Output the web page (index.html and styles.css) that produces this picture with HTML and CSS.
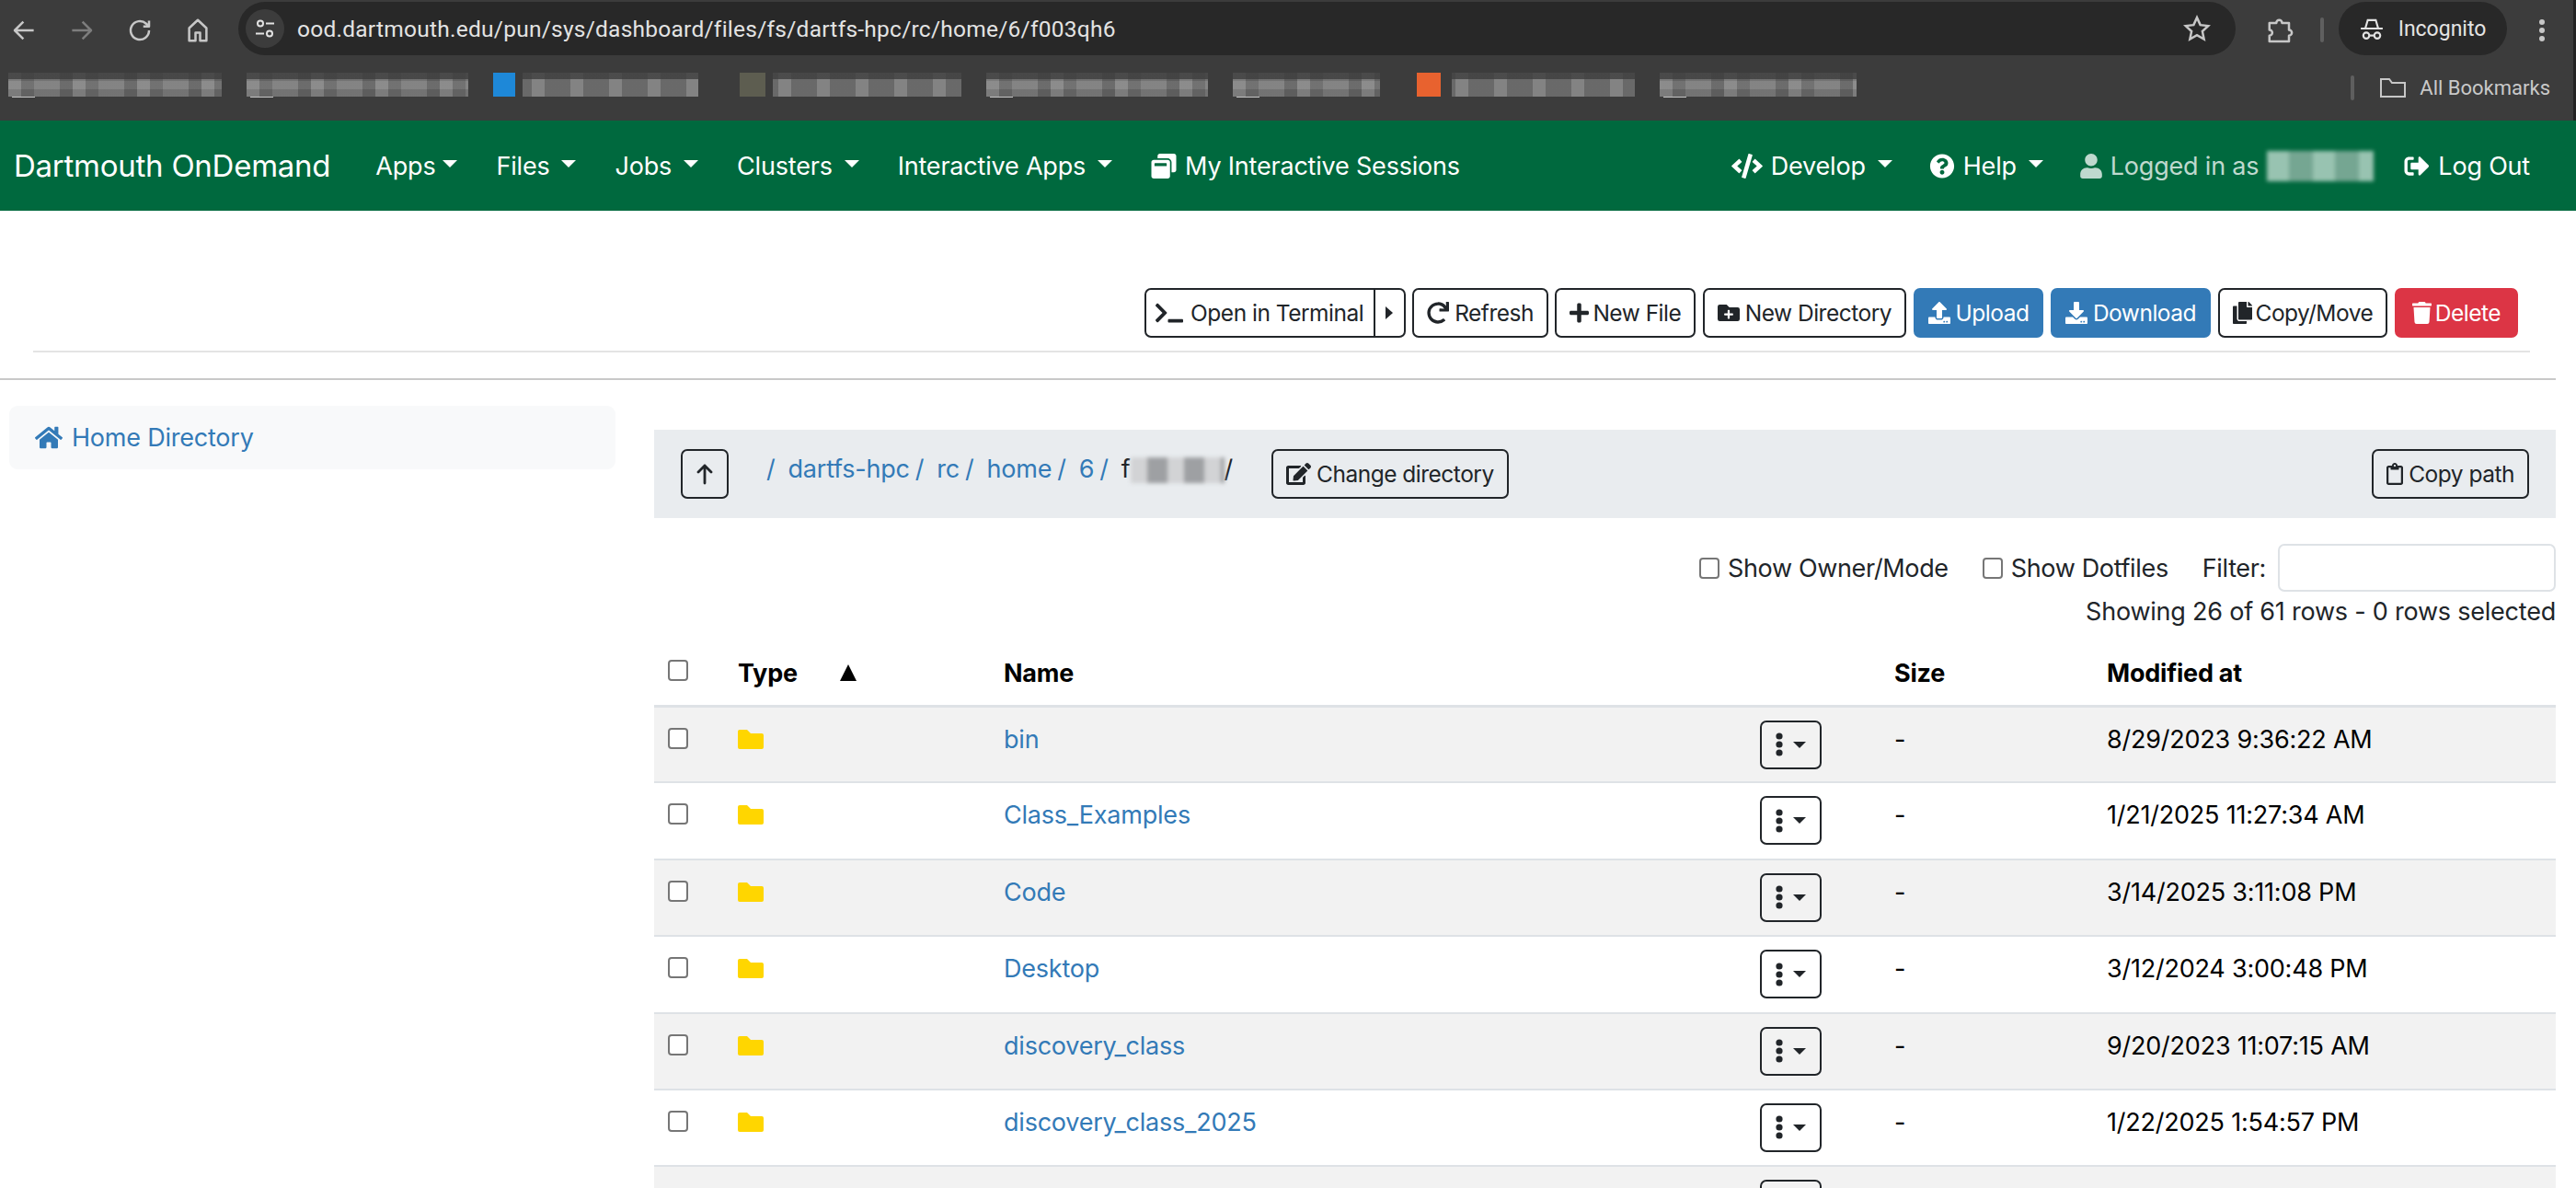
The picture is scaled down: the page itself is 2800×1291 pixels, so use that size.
FILE: index.html
```html
<!DOCTYPE html>
<html lang="en">
<head>
<meta charset="utf-8">
<title>Dartmouth OnDemand</title>
<link rel="stylesheet" href="styles.css">
</head>
<body>
<svg class="sprite" aria-hidden="true">
<symbol id="i-terminal" viewBox="0 0 640 512"><path d="M257.981 272.971L63.638 467.314c-9.373 9.373-24.569 9.373-33.941 0L7.029 444.647c-9.357-9.357-9.375-24.522-.04-33.901L161.011 256 6.99 101.255c-9.335-9.379-9.317-24.544.04-33.901l22.667-22.667c9.373-9.373 24.569-9.373 33.941 0L257.981 239.03c9.373 9.372 9.373 24.568 0 33.941zM640 456v-32c0-13.255-10.745-24-24-24H312c-13.255 0-24 10.745-24 24v32c0 13.255 10.745 24 24 24h304c13.255 0 24-10.745 24-24z"/></symbol>
<symbol id="i-redo" viewBox="0 0 512 512"><path d="M500.33 0h-47.41a12 12 0 0 0-12 12.57l4 82.76A247.42 247.42 0 0 0 256 8C119.34 8 7.9 119.53 8 256.19 8.1 393.07 119.1 504 256 504a247.1 247.1 0 0 0 166.18-63.91 12 12 0 0 0 .48-17.43l-34-34a12 12 0 0 0-16.38-.55A176 176 0 1 1 402.1 157.8l-101.53-4.87a12 12 0 0 0-12.57 12v47.41a12 12 0 0 0 12 12h200.33a12 12 0 0 0 12-12V12a12 12 0 0 0-12-12z"/></symbol>
<symbol id="i-plus" viewBox="0 0 448 512"><path d="M416 208H272V64c0-17.67-14.33-32-32-32h-32c-17.67 0-32 14.33-32 32v144H32c-17.67 0-32 14.33-32 32v32c0 17.67 14.33 32 32 32h144v144c0 17.67 14.33 32 32 32h32c17.67 0 32-14.33 32-32V304h144c17.67 0 32-14.33 32-32v-32c0-17.67-14.33-32-32-32z"/></symbol>
<symbol id="i-folder-plus" viewBox="0 0 512 512"><path d="M464,128H272L208,64H48A48,48,0,0,0,0,112V400a48,48,0,0,0,48,48H464a48,48,0,0,0,48-48V176A48,48,0,0,0,464,128ZM359.5,296a16,16,0,0,1-16,16h-64v64a16,16,0,0,1-16,16h-16a16,16,0,0,1-16-16V312h-64a16,16,0,0,1-16-16V280a16,16,0,0,1,16-16h64V200a16,16,0,0,1,16-16h16a16,16,0,0,1,16,16v64h64a16,16,0,0,1,16,16Z"/></symbol>
<symbol id="i-upload" viewBox="0 0 512 512"><path d="M296 384h-80c-13.3 0-24-10.7-24-24V192h-87.7c-17.8 0-26.7-21.5-14.1-34.1L242.3 5.7c7.5-7.5 19.8-7.5 27.3 0l152.2 152.2c12.6 12.6 3.7 34.1-14.1 34.1H320v168c0 13.3-10.7 24-24 24zm216-8v112c0 13.3-10.7 24-24 24H24c-13.3 0-24-10.7-24-24V376c0-13.3 10.7-24 24-24h136v8c0 30.9 25.1 56 56 56h80c30.9 0 56-25.1 56-56v-8h136c13.3 0 24 10.7 24 24zm-124 88c0-11-9-20-20-20s-20 9-20 20 9 20 20 20 20-9 20-20zm64 0c0-11-9-20-20-20s-20 9-20 20 9 20 20 20 20-9 20-20z"/></symbol>
<symbol id="i-download" viewBox="0 0 512 512"><path d="M216 0h80c13.3 0 24 10.7 24 24v168h87.7c17.8 0 26.7 21.5 14.1 34.1L269.7 378.3c-7.5 7.5-19.8 7.5-27.3 0L90.1 226.1c-12.6-12.6-3.7-34.1 14.1-34.1H192V24c0-13.3 10.7-24 24-24zm296 376v112c0 13.3-10.7 24-24 24H24c-13.3 0-24-10.7-24-24V376c0-13.3 10.7-24 24-24h146.7l49 49c20.1 20.1 52.5 20.1 72.6 0l49-49H488c13.3 0 24 10.7 24 24zm-124 88c0-11-9-20-20-20s-20 9-20 20 9 20 20 20 20-9 20-20zm64 0c0-11-9-20-20-20s-20 9-20 20 9 20 20 20 20-9 20-20z"/></symbol>
<symbol id="i-copy" viewBox="0 0 448 512"><path d="M320 448v40c0 13.255-10.745 24-24 24H24c-13.255 0-24-10.745-24-24V120c0-13.255 10.745-24 24-24h72v296c0 30.879 25.121 56 56 56h168zm0-344V0H152c-13.255 0-24 10.745-24 24v368c0 13.255 10.745 24 24 24h272c13.255 0 24-10.745 24-24V128H344c-13.2 0-24-10.8-24-24zm120.971-31.029L375.029 7.029A24 24 0 0 0 358.059 0H352v96h96v-6.059a24 24 0 0 0-7.029-16.97z"/></symbol>
<symbol id="i-trash" viewBox="0 0 448 512"><path d="M432 32H312l-9.4-18.7A24 24 0 0 0 281.1 0H166.8a23.72 23.72 0 0 0-21.4 13.3L136 32H16A16 16 0 0 0 0 48v32a16 16 0 0 0 16 16h416a16 16 0 0 0 16-16V48a16 16 0 0 0-16-16zM53.2 467a48 48 0 0 0 47.9 45h245.8a48 48 0 0 0 47.9-45L416 128H32z"/></symbol>
<symbol id="i-edit" viewBox="0 0 576 512"><path d="M402.6 83.2l90.2 90.2c3.8 3.8 3.8 10 0 13.8L274.4 405.6l-92.8 10.3c-12.4 1.4-22.9-9.1-21.5-21.5l10.3-92.8L388.8 83.2c3.8-3.8 10-3.8 13.8 0zm162-22.9l-48.8-48.8c-15.2-15.2-39.9-15.2-55.2 0l-35.4 35.4c-3.8 3.8-3.8 10 0 13.8l90.2 90.2c3.8 3.8 10 3.8 13.8 0l35.4-35.4c15.2-15.3 15.2-40 0-55.2zM384 346.2V448H64V128h229.8c3.2 0 6.2-1.3 8.5-3.5l40-40c7.6-7.6 2.2-20.5-8.5-20.5H48C21.5 64 0 85.5 0 112v352c0 26.5 21.5 48 48 48h352c26.5 0 48-21.5 48-48V306.2c0-10.7-12.9-16-20.5-8.5l-40 40c-2.2 2.3-3.5 5.3-3.5 8.5z"/></symbol>
<symbol id="i-clipboard" viewBox="0 0 384 512"><path d="M336 64h-80c0-35.3-28.7-64-64-64s-64 28.7-64 64H48C21.5 64 0 85.5 0 112v352c0 26.5 21.5 48 48 48h288c26.5 0 48-21.5 48-48V112c0-26.5-21.5-48-48-48zM192 40c13.3 0 24 10.7 24 24s-10.7 24-24 24-24-10.7-24-24 10.7-24 24-24zm144 418c0 3.3-2.7 6-6 6H54c-3.3 0-6-2.7-6-6V118c0-3.3 2.7-6 6-6h42v36c0 6.6 5.4 12 12 12h168c6.6 0 12-5.4 12-12v-36h42c3.3 0 6 2.7 6 6z"/></symbol>
<symbol id="i-window" viewBox="0 0 512 512"><path d="M512 48v288c0 26.5-21.5 48-48 48h-48V176c0-44.1-35.9-80-80-80H128V48c0-26.5 21.5-48 48-48h288c26.5 0 48 21.5 48 48zM384 176v288c0 26.5-21.5 48-48 48H48c-26.5 0-48-21.5-48-48V176c0-26.5 21.5-48 48-48h288c26.5 0 48 21.5 48 48zm-68 28c0-6.6-5.4-12-12-12H76c-6.6 0-12 5.4-12 12v52h252v-52z"/></symbol>
<symbol id="i-code" viewBox="0 0 640 512"><path d="M278.9 511.5l-61-17.7c-6.4-1.8-10-8.5-8.2-14.9L346.2 8.7c1.8-6.4 8.5-10 14.9-8.2l61 17.7c6.4 1.8 10 8.5 8.2 14.9L293.8 503.3c-1.9 6.4-8.5 10.1-14.9 8.2zm-114-112.2l43.5-46.4c4.6-4.9 4.3-12.7-.8-17.2L117 256l90.6-79.7c5.1-4.5 5.5-12.3.8-17.2l-43.5-46.4c-4.5-4.8-12.1-5.1-17-.5L3.8 247.2c-5.1 4.7-5.1 12.8 0 17.5l144.1 135.1c4.9 4.6 12.5 4.4 17-.5zm327.2.6l144.1-135.1c5.1-4.7 5.1-12.8 0-17.5L492.1 112.1c-4.8-4.5-12.4-4.3-17 .5L431.6 159c-4.6 4.9-4.3 12.7.8 17.2L523 256l-90.6 79.7c-5.1 4.5-5.5 12.3-.8 17.2l43.5 46.4c4.5 4.9 12.1 5.1 17 .6z"/></symbol>
<symbol id="i-help" viewBox="0 0 512 512"><path d="M504 256c0 136.997-111.043 248-248 248S8 392.997 8 256C8 119.083 119.043 8 256 8s248 111.083 248 248zM262.655 90c-54.497 0-89.255 22.957-116.549 63.758-3.536 5.286-2.353 12.415 2.715 16.258l34.699 26.31c5.205 3.947 12.621 3.008 16.665-2.122 17.864-22.658 30.113-35.797 57.303-35.797 20.429 0 45.698 13.148 45.698 32.958 0 14.976-12.363 22.667-32.534 33.976C247.128 238.528 216 254.941 216 296v4c0 6.627 5.373 12 12 12h56c6.627 0 12-5.373 12-12v-1.333c0-28.462 83.186-29.647 83.186-106.667 0-58.002-60.165-102-116.531-102zM256 338c-25.365 0-46 20.635-46 46 0 25.364 20.635 46 46 46s46-20.636 46-46c0-25.365-20.635-46-46-46z"/></symbol>
<symbol id="i-user" viewBox="0 0 448 512"><path d="M224 256c70.7 0 128-57.3 128-128S294.7 0 224 0 96 57.3 96 128s57.3 128 128 128zm89.6 32h-16.7c-22.2 10.2-46.9 16-72.9 16s-50.6-5.8-72.9-16h-16.7C60.2 288 0 348.2 0 422.4V464c0 26.5 21.5 48 48 48h352c26.5 0 48-21.5 48-48v-41.6c0-74.2-60.2-134.4-134.4-134.4z"/></symbol>
<symbol id="i-logout" viewBox="0 0 512 512"><path d="M497 273L329 441c-15 15-41 4.5-41-17v-96H152c-13.3 0-24-10.7-24-24v-96c0-13.3 10.7-24 24-24h136V88c0-21.4 25.9-32 41-17l168 168c9.3 9.4 9.3 24.6 0 34zM192 436v-40c0-6.6-5.4-12-12-12H96c-17.7 0-32-14.3-32-32V160c0-17.7 14.3-32 32-32h84c6.6 0 12-5.4 12-12V76c0-6.6-5.4-12-12-12H96c-53 0-96 43-96 96v192c0 53 43 96 96 96h84c6.6 0 12-5.4 12-12z"/></symbol>
<symbol id="i-home" viewBox="0 0 576 512"><path d="M280.37 148.26L96 300.11V464a16 16 0 0 0 16 16l112.06-.29a16 16 0 0 0 15.92-16V368a16 16 0 0 1 16-16h64a16 16 0 0 1 16 16v95.64a16 16 0 0 0 16 16.05L464 480a16 16 0 0 0 16-16V300L295.67 148.26a12.19 12.19 0 0 0-15.3 0zM571.6 251.47L488 182.56V44.05a12 12 0 0 0-12-12h-56a12 12 0 0 0-12 12v72.61L318.47 43a48 48 0 0 0-61 0L4.34 251.47a12 12 0 0 0-1.6 16.9l25.5 31A12 12 0 0 0 45.15 301l235.22-193.74a12.19 12.19 0 0 1 15.3 0L530.9 301a12 12 0 0 0 16.9-1.6l25.5-31a12 12 0 0 0-1.7-16.93z"/></symbol>
<symbol id="i-folder" viewBox="0 0 28 21"><path d="M2 0h8l4 4h12a2 2 0 0 1 2 2v13a2 2 0 0 1-2 2H2a2 2 0 0 1-2-2V2a2 2 0 0 1 2-2z"/></symbol>
<symbol id="i-dots" viewBox="0 0 8 26"><circle cx="4" cy="4" r="3.6"/><circle cx="4" cy="13" r="3.6"/><circle cx="4" cy="22" r="3.6"/></symbol>
<symbol id="i-up" viewBox="0 0 20 24"><path d="M10 22V3M3 10l7-7 7 7" fill="none" stroke="currentColor" stroke-width="2.8" stroke-linecap="round" stroke-linejoin="round"/></symbol>
</svg>

<header class="chrome">
  <div class="toolbar">
    <div class="tool-nav">
      <svg class="tb-icon" viewBox="0 0 24 24"><path d="M20.500 12H4.500M11.500 4.500L4 12l7.500 7.500"/></svg>
      <svg class="tb-icon dim" viewBox="0 0 24 24"><path d="M3.500 12h16M12.500 4.500L20 12l-7.500 7.500"/></svg>
      <svg class="tb-icon" viewBox="0 0 24 24"><path d="M20 12a8 8 0 1 1-2.500-5.800L20 8.500M20 3.500v5h-5"/></svg>
      <svg class="tb-icon" viewBox="0 0 24 24"><path d="M4.500 21V10L12 3l7.500 7v11h-5.500v-7h-4v7z"/></svg>
    </div>
    <div class="omnibox">
      <span class="site-chip"><svg class="chip-icon" viewBox="0 0 24 24"><circle cx="7" cy="6.500" r="3"/><path d="M13 6.500h9M2 17.500h9"/><circle cx="17" cy="17.500" r="3"/></svg></span>
      <span class="url">ood.dartmouth.edu/pun/sys/dashboard/files/fs/dartfs-hpc/rc/home/6/f003qh6</span>
      <svg class="star" viewBox="0 0 24 24"><path d="M12 2.500l2.900 6.400 6.900.8-5.100 4.700 1.400 6.900-6.100-3.500-6.100 3.500 1.400-6.900-5.100-4.700 6.900-.8z"/></svg>
    </div>
    <svg class="tb-icon ext" viewBox="0 0 24 24"><path d="M3 5.500h6a2.500 2.500 0 0 1 5 0h6v6a2.500 2.500 0 0 1 0 5v5H3v-5a2.500 2.500 0 0 0 0-5z"/></svg>
    <span class="tb-sep"></span>
    <div class="incognito">
      <svg class="inc-icon" viewBox="0 0 24 24"><path d="M1 12h22M5.500 12L8 3.500h8l2.500 8.500"/><circle cx="6.500" cy="19" r="3"/><circle cx="17.500" cy="19" r="3"/><path d="M9.500 19h5"/></svg>
      <span>Incognito</span>
    </div>
    <svg class="menu-dots" viewBox="0 0 6 24"><circle cx="3" cy="3" r="3"/><circle cx="3" cy="12" r="3"/><circle cx="3" cy="21" r="3"/></svg>
  </div>
  <div class="bookmarks">
    <div class="bm-list">
      <span class="bm b1"></span><span class="bm b2"></span><span class="bm b3 blue"></span><span class="bm b4 olive"></span><span class="bm b5"></span><span class="bm b6"></span><span class="bm b7 orange"></span><span class="bm b8"></span>
    </div>
    <div class="all-bm">
      <span class="bm-sep"></span>
      <svg class="bm-folder" viewBox="0 0 28 21"><path d="M1 20V1h9l3 4h14v15z"/></svg>
      <span>All Bookmarks</span>
    </div>
  </div>
</header>

<nav class="topnav">
  <a class="brand">Dartmouth OnDemand</a>
  <a class="nav-item tight">Apps<i class="caret"></i></a>
  <a class="nav-item">Files<i class="caret"></i></a>
  <a class="nav-item">Jobs<i class="caret"></i></a>
  <a class="nav-item">Clusters<i class="caret"></i></a>
  <a class="nav-item">Interactive Apps<i class="caret"></i></a>
  <a class="nav-item"><svg class="ic"><use href="#i-window"/></svg>My Interactive Sessions</a>
  <span class="nav-spacer"></span>
  <a class="nav-item right"><svg class="ic wide"><use href="#i-code"/></svg>Develop<i class="caret"></i></a>
  <a class="nav-item right"><svg class="ic"><use href="#i-help"/></svg>Help<i class="caret"></i></a>
  <span class="nav-item user"><svg class="ic"><use href="#i-user"/></svg>Logged in as<span class="name-blur"></span></span>
  <a class="nav-item logout"><svg class="ic"><use href="#i-logout"/></svg>Log Out</a>
</nav>

<main>
  <div class="actions">
    <div class="split">
      <button class="btn btn-main"><svg class="ic term"><use href="#i-terminal"/></svg>Open in Terminal</button><button class="btn btn-side"><i class="caret-right"></i></button>
    </div>
    <button class="btn"><svg class="ic"><use href="#i-redo"/></svg>Refresh</button>
    <button class="btn"><svg class="ic narrow"><use href="#i-plus"/></svg>New File</button>
    <button class="btn"><svg class="ic"><use href="#i-folder-plus"/></svg>New Directory</button>
    <button class="btn primary"><svg class="ic"><use href="#i-upload"/></svg>Upload</button>
    <button class="btn primary"><svg class="ic"><use href="#i-download"/></svg>Download</button>
    <button class="btn"><svg class="ic narrow"><use href="#i-copy"/></svg>Copy/Move</button>
    <button class="btn danger"><svg class="ic narrow"><use href="#i-trash"/></svg>Delete</button>
  </div>
  <hr class="rule-a">
  <hr class="rule-b">

  <div class="columns">
    <aside class="sidebar">
      <a class="fav"><svg class="ic home"><use href="#i-home"/></svg>Home Directory</a>
    </aside>
    <section class="browser">
      <div class="pathbar">
        <button class="btn up"><svg class="ic-up"><use href="#i-up"/></svg></button>
        <ol class="crumbs">
          <li><a>/</a></li>
          <li><a>dartfs-hpc</a><a class="sl">/</a></li>
          <li><a>rc</a><a class="sl">/</a></li>
          <li><a>home</a><a class="sl">/</a></li>
          <li><a>6</a><a class="sl">/</a></li>
          <li class="current">f<span class="crumb-blur"></span>/</li>
        </ol>
        <button class="btn change"><svg class="ic edit"><use href="#i-edit"/></svg>Change directory</button>
        <button class="btn copy-path"><svg class="ic clip"><use href="#i-clipboard"/></svg>Copy path</button>
      </div>

      <div class="filters">
        <label class="chk"><input type="checkbox">Show Owner/Mode</label>
        <label class="chk"><input type="checkbox">Show Dotfiles</label>
        <label class="filter-label">Filter:</label>
        <input class="filter-input" type="text">
      </div>
      <div class="count">Showing 26 of 61 rows - 0 rows selected</div>

      <table class="file-table">
        <colgroup><col class="c1"><col class="c2"><col class="c3"><col class="c4"><col class="c5"><col class="c6"></colgroup>
        <thead>
          <tr><th><input type="checkbox"></th><th class="type-h">Type<i class="sort"></i></th><th>Name</th><th></th><th>Size</th><th>Modified at</th></tr>
        </thead>
        <tbody>
          <tr class="odd"><td><input type="checkbox"></td><td><svg class="folder"><use href="#i-folder"/></svg></td><td><a>bin</a></td><td><button class="btn row-btn"><svg class="dots"><use href="#i-dots"/></svg><i class="caret"></i></button></td><td>-</td><td>8/29/2023 9:36:22 AM</td></tr>
          <tr><td><input type="checkbox"></td><td><svg class="folder"><use href="#i-folder"/></svg></td><td><a>Class_Examples</a></td><td><button class="btn row-btn"><svg class="dots"><use href="#i-dots"/></svg><i class="caret"></i></button></td><td>-</td><td>1/21/2025 11:27:34 AM</td></tr>
          <tr class="odd"><td><input type="checkbox"></td><td><svg class="folder"><use href="#i-folder"/></svg></td><td><a>Code</a></td><td><button class="btn row-btn"><svg class="dots"><use href="#i-dots"/></svg><i class="caret"></i></button></td><td>-</td><td>3/14/2025 3:11:08 PM</td></tr>
          <tr><td><input type="checkbox"></td><td><svg class="folder"><use href="#i-folder"/></svg></td><td><a>Desktop</a></td><td><button class="btn row-btn"><svg class="dots"><use href="#i-dots"/></svg><i class="caret"></i></button></td><td>-</td><td>3/12/2024 3:00:48 PM</td></tr>
          <tr class="odd"><td><input type="checkbox"></td><td><svg class="folder"><use href="#i-folder"/></svg></td><td><a>discovery_class</a></td><td><button class="btn row-btn"><svg class="dots"><use href="#i-dots"/></svg><i class="caret"></i></button></td><td>-</td><td>9/20/2023 11:07:15 AM</td></tr>
          <tr><td><input type="checkbox"></td><td><svg class="folder"><use href="#i-folder"/></svg></td><td><a>discovery_class_2025</a></td><td><button class="btn row-btn"><svg class="dots"><use href="#i-dots"/></svg><i class="caret"></i></button></td><td>-</td><td>1/22/2025 1:54:57 PM</td></tr>
          <tr class="odd"><td></td><td></td><td></td><td><button class="btn row-btn"><svg class="dots"><use href="#i-dots"/></svg><i class="caret"></i></button></td><td></td><td></td></tr>
        </tbody>
      </table>
    </section>
  </div>
</main>
</body>
</html>
```

FILE: styles.css
```css
* { box-sizing: border-box; }
html, body { margin: 0; height: 1291px; overflow: hidden; background: #fff; }
body { font-family: Inter, "Liberation Sans", sans-serif; font-size: 27px; letter-spacing: -.22px; color: #212529; }
.sprite { display: none; }
svg { fill: currentColor; }
a { color: #337ab7; text-decoration: none; }

/* browser chrome */
.chrome { background: #3c3c3c; height: 131px; color: #e3e3e3; letter-spacing: 0; border-right: 3px solid #232323; }
.toolbar { height: 65px; display: flex; align-items: center; }
.tool-nav { display: flex; gap: 33px; padding-left: 11px; width: 259px; }
.tb-icon { width: 30px; height: 30px; fill: none; stroke: #c7c7c7; stroke-width: 2; stroke-linejoin: round; flex: none; }
.tb-icon.dim { stroke: #7d7d7d; }
.omnibox { width: 2171px; height: 58px; margin-top: -3px; border-radius: 29px; background: #282828; display: flex; align-items: center; }
.site-chip { width: 42px; height: 42px; margin-left: 8px; border-radius: 50%; background: #3c3c3c; display: flex; align-items: center; justify-content: center; }
.chip-icon { width: 24px; height: 24px; fill: none; stroke: #e3e3e3; stroke-width: 2; }
.url { font-family: Roboto, "Liberation Sans", sans-serif; font-size: 24.500px; color: #e3e3e3; margin-left: 14px; flex: 1; letter-spacing: .25px; }
.star { width: 30px; height: 30px; fill: none; stroke: #c7c7c7; stroke-width: 2; margin-right: 27px; }
.ext { margin-left: 33px; }
.tb-sep { width: 4px; height: 27px; background: #5f5f5f; border-radius: 2px; margin-left: 29px; }
.incognito { width: 183px; height: 58px; margin-left: 16px; margin-top: -3px; border-radius: 29px; background: #282828; display: flex; align-items: center; justify-content: center; gap: 16px; font-family: Roboto, "Liberation Sans", sans-serif; font-size: 23px; color: #e3e3e3; }
.inc-icon { width: 26px; height: 26px; fill: none; stroke: #e3e3e3; stroke-width: 2; }
.menu-dots { width: 6px; height: 24px; margin-left: 35px; fill: #c7c7c7; }
.bookmarks { height: 66px; display: flex; align-items: center; justify-content: space-between; padding: 0 25px 12px 9px; }
.bm-list { display: flex; align-items: center; }
.bm { display: block; position: relative; height: 26px; background-color: #757575;
  background-image:
    linear-gradient(180deg, rgba(60,60,60,.78) 0 7px, transparent 7px),
    repeating-linear-gradient(90deg, rgba(255,255,255,.1) 0 14px, rgba(0,0,0,.1) 14px 28px, rgba(255,255,255,.04) 28px 56px, rgba(0,0,0,.15) 56px 70px),
    repeating-linear-gradient(180deg, rgba(0,0,0,.07) 0 9px, rgba(255,255,255,.07) 9px 18px);
}
.b1::after, .b2::after, .b5::after, .b6::after, .b8::after { content: ""; position: absolute; left: 4px; top: 26px; width: 25px; height: 1px; background: #c4c4c4; }
.b1 { width: 232px; } .b2 { width: 241px; margin-left: 27px; } .b3 { width: 223px; margin-left: 27px; } .b4 { width: 241px; margin-left: 45px; }
.b5 { width: 241px; margin-left: 27px; } .b6 { width: 160px; margin-left: 27px; } .b7 { width: 237px; margin-left: 40px; } .b8 { width: 214px; margin-left: 27px; }
.blue { background-image: linear-gradient(90deg, #1e88d8 0 24px, #3c3c3c 24px 32px, transparent 32px), linear-gradient(180deg, rgba(60,60,60,.78) 0 7px, transparent 7px), repeating-linear-gradient(90deg, rgba(255,255,255,.1) 0 14px, rgba(0,0,0,.1) 14px 42px); background-size: 100% 100%; }
.olive { background-image: linear-gradient(90deg, #5d5d50 0 28px, #3c3c3c 28px 36px, transparent 36px), linear-gradient(180deg, rgba(60,60,60,.78) 0 7px, transparent 7px), repeating-linear-gradient(90deg, rgba(255,255,255,.1) 0 14px, rgba(0,0,0,.1) 14px 42px); }
.orange { background-image: linear-gradient(90deg, #e8622f 0 26px, #3c3c3c 26px 38px, transparent 38px), linear-gradient(180deg, rgba(60,60,60,.78) 0 7px, transparent 7px), repeating-linear-gradient(90deg, rgba(255,255,255,.1) 0 14px, rgba(0,0,0,.1) 14px 42px); }
.all-bm { display: flex; align-items: center; margin-top: 7px; font-family: Roboto, "Liberation Sans", sans-serif; font-size: 22px; color: #c9c9c9; }
.bm-sep { width: 4px; height: 27px; background: #5f5f5f; border-radius: 2px; margin-right: 28px; }
.bm-folder { width: 28px; height: 21px; fill: none; stroke: #c7c7c7; stroke-width: 2; margin-right: 15px; }

/* top nav */
.topnav { height: 98px; background: #00693e; display: flex; align-items: center; padding-left: 15px; padding-right: 50px; color: #fff; font-size: 27px; letter-spacing: -.2px; }
.topnav a, .topnav .nav-item { color: #fff; display: flex; align-items: center; white-space: nowrap; }
.brand { font-size: 33px; margin-right: 49px; letter-spacing: -.25px; }
.nav-item { margin-right: 42px; }
.nav-item.right { margin-right: 40px; }
.nav-spacer { flex: 1; }
.nav-item .ic { width: 28px; height: 27px; margin-right: 9px; }
.nav-item .ic.wide { width: 34px; }
.caret { display: inline-block; margin-left: 13px; margin-top: -4px; border-top: 8px solid currentColor; border-left: 8.500px solid transparent; border-right: 8.500px solid transparent; }
.tight .caret { margin-left: 8px; }
.topnav .nav-item.user { color: rgba(255,255,255,.75); margin-right: 33px; }
.user .ic { width: 24px; }
.name-blur { display: block; width: 116px; height: 33px; margin-left: 9px; background: #7fb49e; background-image: repeating-linear-gradient(90deg, rgba(255,255,255,.2) 0 24px, rgba(0,0,0,.08) 24px 50px); filter: blur(2px); }
.nav-item.logout { margin-right: 0; }

/* action toolbar */
main { display: block; height: 1062px; overflow: hidden; }
.actions { display: flex; justify-content: flex-end; gap: 7.500px; padding: 84px 63px 0 0; }
.btn { display: inline-flex; align-items: center; justify-content: center; height: 54px; padding: 0 14px; border: 2px solid #212529; border-radius: 7px; background: transparent; color: #212529; font-family: inherit; font-size: 24.500px; letter-spacing: -.5px; white-space: nowrap; }
.btn .ic { width: 24px; height: 24px; margin-right: 6px; flex: none; }
.btn .ic.term { width: 30px; margin-right: 8px; }
.btn .ic.narrow { width: 21px; margin-right: 4px; }
.btn .ic.edit { width: 27px; }
.btn .ic.clip { width: 18px; }
.split { display: flex; }
.btn-main { border-radius: 7px 0 0 7px; width: 251px; padding: 0 12px; }
.btn-side { border-radius: 0 7px 7px 0; border-left: 0; width: 33px; padding: 0; }
.caret-right { display: block; border-left: 8px solid #212529; border-top: 7px solid transparent; border-bottom: 7px solid transparent; }
.primary { background: #337ab7; border-color: #337ab7; color: #fff; }
.danger { background: #dc3545; border-color: #dc3545; color: #fff; padding: 0 17px; }
.rule-a { margin: 14px 50px 0 36px; border: 0; border-top: 2px solid #e4e4e4; }
.rule-b { margin: 28px 22px 0 0; border: 0; border-top: 2px solid #c9c9c9; }

/* columns */
.columns { display: flex; padding-left: 10px; }
.sidebar { width: 659px; margin-top: 28px; }
.fav { display: flex; align-items: center; height: 69px; padding-left: 28px; background: #f8f9fa; border-radius: 9px; }
.fav .ic.home { width: 30px; height: 27px; margin-right: 10px; }
.browser { width: 2067px; margin-left: 42px; margin-top: 54px; }
.pathbar { display: flex; align-items: center; height: 96px; background: #e9ecef; padding-left: 29px; padding-right: 29px; }
.up { width: 52px; padding: 0; }
.ic-up { width: 20px; height: 24px; }
.crumbs { list-style: none; display: flex; margin: -11px 0 0 0; padding: 0 0 0 41px; gap: 14px; font-size: 27px; }
.crumbs li { display: flex; }
.crumbs .sl { margin-left: 6px; }
.current { color: #212529; }
.crumb-blur { display: block; width: 102px; height: 28px; margin-top: 4px; background: #b4b6b9; background-image: repeating-linear-gradient(90deg, rgba(255,255,255,.4) 0 18px, rgba(0,0,0,.12) 18px 40px); filter: blur(2px); }
.change { margin-left: 42px; }
.copy-path { margin-left: auto; }

.filters { display: flex; align-items: center; justify-content: flex-end; height: 52px; margin-top: 28px; letter-spacing: -.35px; }
.chk { display: flex; align-items: center; margin-right: 37px; }
input[type=checkbox] { appearance: none; display: block; flex: none; width: 22px; height: 23px; margin: 0; background: #fff; border: 2px solid #767676; border-radius: 4px; }
.chk input { margin-right: 9px; }
.filter-label { margin-right: 13px; }
.filter-input { width: 302px; height: 52px; border: 2px solid #dee2e6; border-radius: 7px; background: #fff; }
.count { text-align: right; margin-top: 2px; line-height: 40px; }

.file-table { border-collapse: collapse; table-layout: fixed; width: 2067px; margin-top: 2px; }
.c1 { width: 79px; } .c2 { width: 289px; } .c3 { width: 821px; } .c4 { width: 147px; } .c5 { width: 231px; } .c6 { width: 500px; }
.file-table th, .file-table td { text-align: left; vertical-align: top; padding: 0 0 0 12px; }
.file-table th { height: 80px; padding-top: 28px; font-weight: 700; border-bottom: 3px solid #dee2e6; color: #000; }
.file-table tr th:first-child, .file-table tr td:first-child { padding-left: 15px; }
.file-table th input { margin-top: 2px; }
.file-table td { height: 83.400px; padding-top: 17px; border-bottom: 2px solid #dee2e6; color: #000; line-height: 36px; }
.file-table td a { color: #337ab7; }
.file-table tr.odd td { background: #f2f2f2; }
.file-table td input { margin-top: 5px; }
.type-h { position: relative; }
.sort { position: absolute; left: 123px; top: 35px; border-bottom: 18px solid #000; border-left: 9px solid transparent; border-right: 9px solid transparent; }
.folder { width: 28px; height: 21px; fill: #ffd600; display: block; margin-top: 7px; }
.row-btn { width: 67px; height: 53px; padding: 0; margin-left: 1px; margin-top: -3px; display: flex; }
.dots { width: 8px; height: 26px; }
.row-btn .caret { margin: 0 0 0 11px; border-top-width: 7px; border-left-width: 7px; border-right-width: 7px; }
```
